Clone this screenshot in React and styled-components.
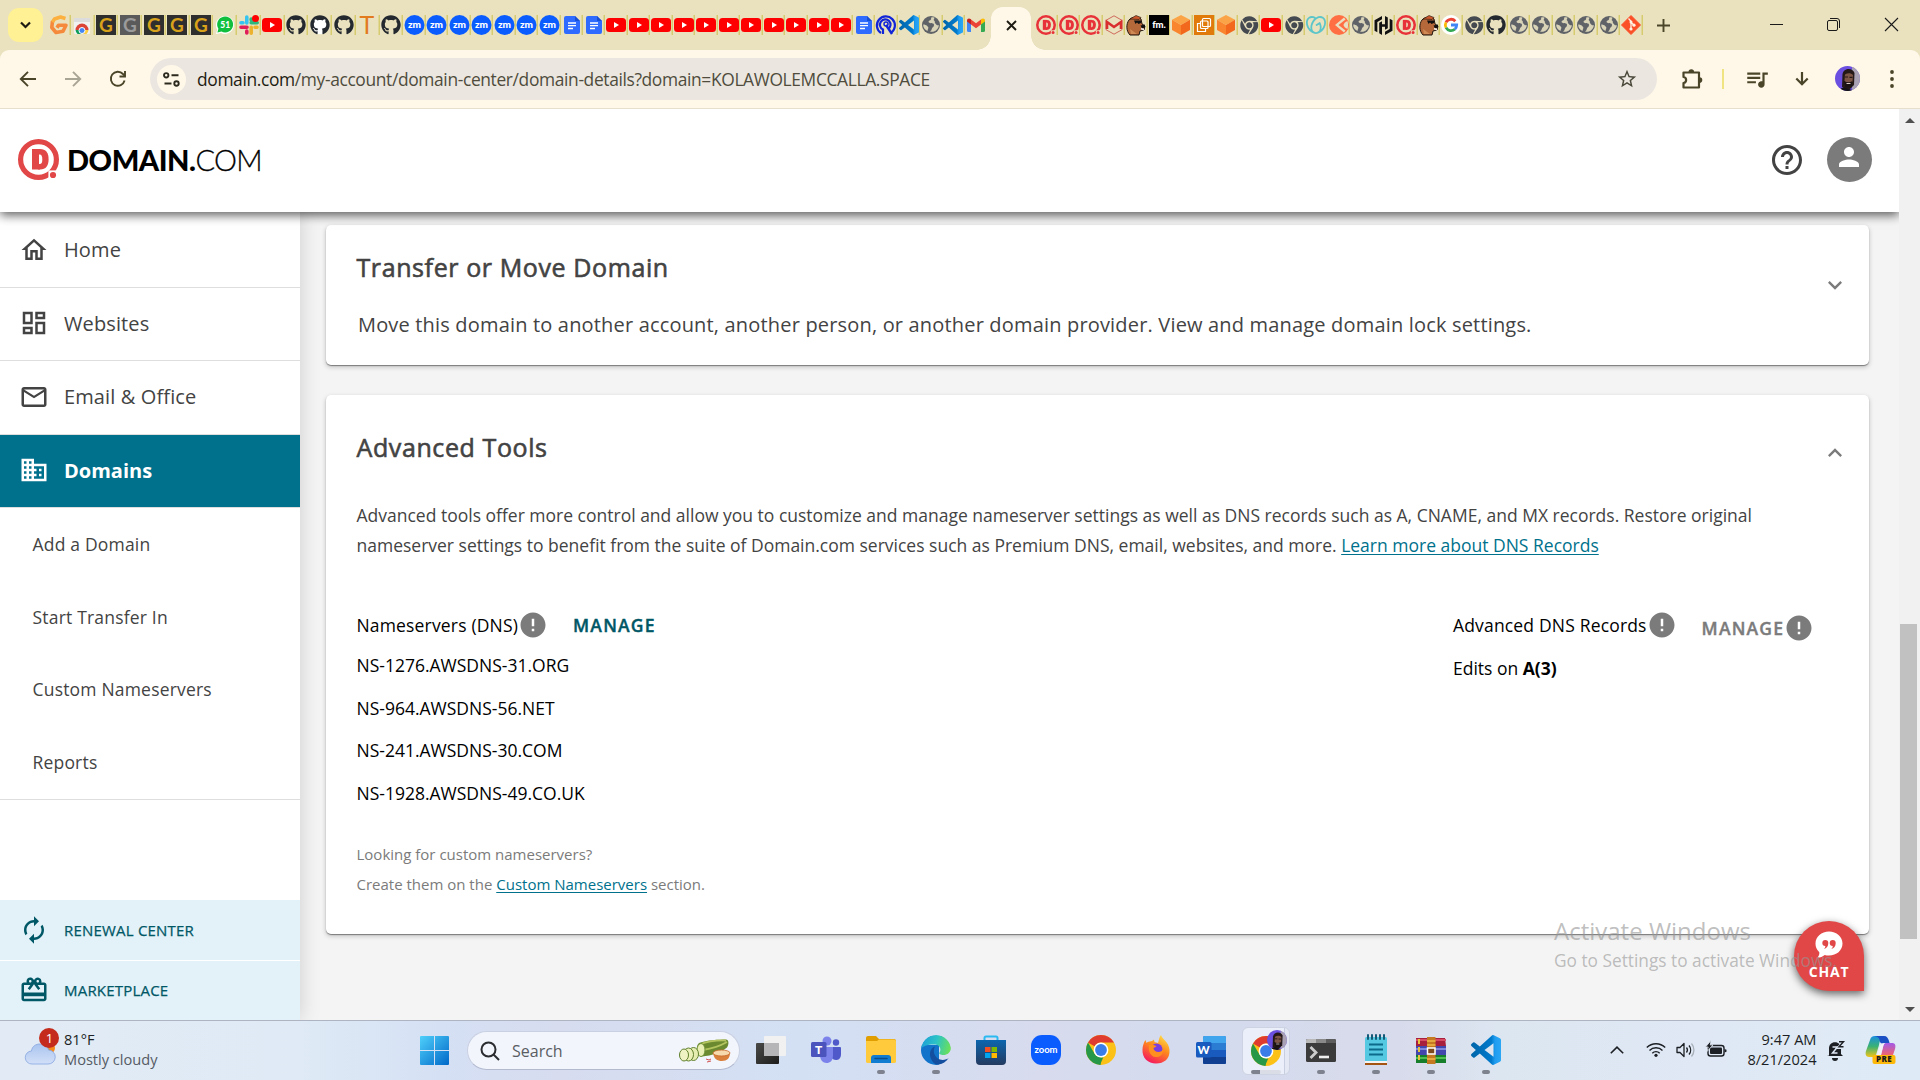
import React from 'react';
import styled, { createGlobalStyle } from 'styled-components';
import {
  MdOutlineHome, MdOutlineDashboard, MdOutlineEmail, MdDomain, MdAutorenew, MdRedeem,
  MdHelpOutline, MdPerson, MdExpandMore, MdExpandLess, MdQueueMusic, MdError, MdStarBorder,
} from 'react-icons/md';
import { FaGithub, FaChrome } from 'react-icons/fa';
import { SiGodaddy, SiHashicorp } from 'react-icons/si';

const Global = createGlobalStyle`
  * { box-sizing: border-box; }
  html, body { margin: 0; padding: 0; overflow: hidden; }
  body { font-family: "Open Sans", "Noto Sans", sans-serif; }
  svg { display: block; flex: none; overflow: visible; }
`;

const Screen = styled.div`
  width: 1920px;
  height: 1080px;
  display: flex;
  flex-direction: column;
  overflow: hidden;
  background: #eae2be;
`;

/* ---------- tab strip ---------- */
const TabStrip = styled.div`
  height: 50px;
  flex: none;
  display: flex;
  align-items: center;
`;
const TabSearch = styled.div`
  width: 35px;
  height: 34px;
  margin: 0 4px 0 8px;
  border-radius: 11px;
  background: #fff194;
  display: flex;
  align-items: center;
  justify-content: center;
`;
const Tab = styled.div`
  width: ${(p) => p.$w}px;
  height: 20px;
  flex: none;
  display: flex;
  align-items: center;
  justify-content: center;
  box-shadow: ${(p) => (p.$last ? 'none' : 'inset -1.5px 0 0 #d6cb6e')};
  padding-right: 0.5px;
`;
const ActiveTab = styled.div`
  width: 40px;
  height: 43px;
  margin: 7px 4px 0 4px;
  flex: none;
  border-radius: 12px 12px 0 0;
  background: #fff8e9;
  display: flex;
  align-items: center;
  justify-content: center;
  padding-bottom: 7px;
  position: relative;
  &::before, &::after {
    content: '';
    position: absolute;
    bottom: 0;
    width: 14px;
    height: 14px;
  }
  &::before { left: -14px; background: radial-gradient(circle at 0 0, transparent 13.5px, #fff8e9 14px); }
  &::after { right: -14px; background: radial-gradient(circle at 100% 0, transparent 13.5px, #fff8e9 14px); }
`;
const NewTab = styled.div`
  width: 41px;
  display: flex;
  justify-content: center;
`;
const WindowButtons = styled.div`
  margin-left: auto;
  display: flex;
  align-items: center;
  gap: 44.5px;
  padding: 0 22.5px 2px 0;
`;

/* ---------- toolbar ---------- */
const Toolbar = styled.div`
  height: 59px;
  flex: none;
  display: flex;
  align-items: center;
  background: #fff8e9;
  border-bottom: 1px solid #e6dfcb;
  border-radius: 9px 9px 0 0;
  padding: 0 20px 0 19px;
`;
const NavButtons = styled.div`
  display: flex;
  gap: 27px;
  width: 131px;
  padding-bottom: 1px;
`;
const Omnibox = styled.div`
  width: 1507px;
  height: 42px;
  flex: none;
  border-radius: 21px;
  background: #ebe7e0;
  display: flex;
  align-items: center;
  padding: 0 19px 0 7px;
`;
const SiteChip = styled.div`
  width: 29px;
  height: 29px;
  border-radius: 50%;
  background: #fff8e9;
  display: flex;
  align-items: center;
  justify-content: center;
  margin-right: 11px;
`;
const Url = styled.div`
  flex: 1;
  font-size: 17.4px;
  letter-spacing: -0.36px;
  color: #4f4c3d;
  white-space: nowrap;
  b { font-weight: 400; color: #1e1c12; }
`;
const ToolbarActions = styled.div`
  flex: 1;
  display: flex;
  align-items: center;
  padding-bottom: 1px;
`;
const Action = styled.div`
  margin-left: ${(p) => p.$gap}px;
`;
const ToolbarDivider = styled.div`
  width: 2px;
  height: 20px;
  background: #efe382;
`;

/* ---------- page ---------- */
const Viewport = styled.div`
  height: 911px;
  flex: none;
  display: flex;
  position: relative;
  background: #f4f4f4;
`;
const Page = styled.div`
  width: 1899px;
  display: flex;
  flex-direction: column;
  overflow: hidden;
`;
const Header = styled.header`
  height: 103px;
  flex: none;
  display: flex;
  align-items: center;
  background: #fff;
  padding: 0 27px 2px 18px;
  box-shadow: 0 3px 10px rgba(0, 0, 0, 0.65);
  position: relative;
  z-index: 2;
`;
const Brand = styled.div`
  display: flex;
  align-items: center;
  gap: 8px;
  flex: 1;
`;
const Wordmark = styled.div`
  font-family: Lato, sans-serif;
  font-size: 29px;
  line-height: 36px;
  letter-spacing: -0.7px;
  font-weight: 300;
  color: #000;
  -webkit-text-stroke: 0.3px #000;
  strong { font-weight: 900; letter-spacing: -0.45px; -webkit-text-stroke: 0; }
`;
const Avatar = styled.div`
  width: 45px;
  height: 45px;
  border-radius: 50%;
  background: #7b7b7b;
  color: #fff;
  display: flex;
  align-items: center;
  justify-content: center;
  padding: 0 1px 5px 0;
  margin-left: 22px;
`;
const Body = styled.div`
  flex: 1;
  display: flex;
  min-height: 0;
`;
const Sidebar = styled.nav`
  width: 300px;
  flex: none;
  display: flex;
  flex-direction: column;
  background: #fff;
  box-shadow: 0 0 20px rgba(0, 0, 0, 0.16);
`;
const NavItem = styled.div`
  height: ${(p) => p.$h}px;
  flex: none;
  display: flex;
  align-items: center;
  gap: 15px;
  padding: 0 0 ${(p) => (p.$first ? 0 : 2)}px 19px;
  border-bottom: 1px solid #dedede;
  font-size: 20px;
  letter-spacing: ${(p) => (p.$active ? 0 : 0.12)}px;
  font-weight: ${(p) => (p.$active ? 700 : 400)};
  color: ${(p) => (p.$active ? '#fff' : '#434343')};
  background: ${(p) => (p.$active ? '#00718c' : '#fff')};
`;
const SubNav = styled.div`
  border-bottom: 1px solid #dedede;
`;
const SubItem = styled.div`
  height: 72.7px;
  display: flex;
  align-items: center;
  padding: 0 0 1px 32.5px;
  font-size: 17.5px;
  letter-spacing: 0.19px;
  color: #434343;
`;
const Promo = styled.div`
  margin-top: auto;
  display: flex;
  flex-direction: column;
  gap: 1px;
`;
const PromoItem = styled.div`
  height: ${(p) => p.$h}px;
  display: flex;
  align-items: center;
  gap: 15px;
  padding: 0 0 1px 19px;
  background: #e3f2f8;
  color: #005766;
  font-size: 15px;
  font-weight: 500;
  letter-spacing: 0.2px;
  -webkit-text-stroke: 0.25px #005766;
  svg { -webkit-text-stroke: 0; }
`;
const Main = styled.main`
  flex: 1;
  display: flex;
  flex-direction: column;
  gap: 30px;
  padding: 13px 30px 0 26px;
`;
const Card = styled.section`
  height: ${(p) => p.$h}px;
  flex: none;
  display: flex;
  justify-content: space-between;
  background: #fff;
  border-radius: 5px;
  padding: ${(p) => p.$pt}px 20px 0 30.5px;
  box-shadow: 0 1px 1px rgba(0, 0, 0, 0.4), 0 2px 5px rgba(0, 0, 0, 0.22);
  color: #434343;
`;
const CardBody = styled.div`
  width: 1440px;
  display: flex;
  flex-direction: column;
`;
const CardTitle = styled.h2`
  margin: 0;
  font-size: 25px;
  line-height: 40px;
  font-weight: 400;
  letter-spacing: 0.6px;
  -webkit-text-stroke: 0.6px #434343;
`;
const CardLead = styled.p`
  margin: 23px 0 0 1.5px;
  font-size: 20px;
  line-height: 30px;
  letter-spacing: 0.175px;
  white-space: nowrap;
`;
const CardText = styled.p`
  margin: 33px 0 0;
  font-size: 17.5px;
  line-height: 30px;
  white-space: nowrap;
`;
const Link = styled.a`
  color: #00718c;
  text-decoration: underline;
  text-underline-offset: 2px;
`;
const Chevron = styled.div`
  color: #7b7b7b;
  padding-top: ${(p) => p.$top}px;
  height: 0;
`;
const DnsColumns = styled.div`
  display: flex;
  justify-content: space-between;
  margin-top: 50px;
  color: #000;
`;
const DnsColumn = styled.div`
  width: ${(p) => p.$w}px;
  flex: none;
  font-size: 17.5px;
`;
const DnsHead = styled.div`
  display: flex;
  align-items: center;
  height: 30px;
  letter-spacing: 0.17px;
  white-space: nowrap;
  svg { color: #7b7b7b; }
`;
const Manage = styled.span`
  display: flex;
  align-items: center;
  margin-left: 25px;
  font-weight: 600;
  letter-spacing: 1.2px;
  color: ${(p) => (p.$muted ? '#7b7b7b' : '#005766')};
  -webkit-text-stroke: 0.4px ${(p) => (p.$muted ? '#7b7b7b' : '#005766')};
  padding-top: ${(p) => (p.$muted ? 5 : 0)}px;
  svg { stroke-width: 0; }
`;
const ServerList = styled.div`
  margin-top: 4px;
  line-height: 42.7px;
`;
const Edits = styled.div`
  margin-top: 13px;
  line-height: 30px;
`;
const Hint = styled.div`
  margin-top: 24.5px;
  font-size: 15px;
  line-height: 30px;
  color: #7b7b7b;
`;

const Scrollbar = styled.div`
  width: 21px;
  display: flex;
  flex-direction: column;
  align-items: center;
  background: #f1f1f1;
  padding: 9px 0 8px;
`;
const Thumb = styled.div`
  width: 17px;
  height: 315px;
  margin: 501px 2px auto 0;
  background: #c1c1c1;
`;
const Arrow = styled.div`
  border: 5px solid transparent;
  border-${(p) => (p.$up ? 'bottom' : 'top')}-color: #505050;
  border-${(p) => (p.$up ? 'top' : 'bottom')}-width: 0;
`;

const ChatButton = styled.div`
  position: absolute;
  right: 56px;
  bottom: 29px;
  width: 70px;
  height: 70px;
  border-radius: 35px 35px 0 35px;
  background: #e14747;
  box-shadow: 0 3px 9px rgba(0, 0, 0, 0.6);
  display: flex;
  flex-direction: column;
  align-items: center;
  padding-top: 10px;
  gap: 4px;
  color: #fff;
  font-size: 14px;
  line-height: 19px;
  font-weight: 700;
  letter-spacing: 0.8px;
`;
const Watermark = styled.div`
  position: absolute;
  left: 1554px;
  top: 805px;
  color: rgba(150, 150, 150, 0.62);
  white-space: nowrap;
  font-size: 17.3px;
  line-height: 26px;
  div { font-size: 24px; line-height: 34px; }
`;

/* ---------- taskbar ---------- */
const Taskbar = styled.div`
  height: 60px;
  flex: none;
  display: flex;
  align-items: center;
  border-top: 1px solid #aeb4c2;
  background: linear-gradient(90deg, #e2ebf5 0, #dfeaf6 300px, #d5e0f4 440px, #d7dcef 560px, #d3e0f4 800px, #d8dbee 1040px, #d4dbee 1200px, #d8dbeb 1400px, #dce6f1 1500px, #dfe8f4 1700px, #deebf6 1920px);
  color: #1c1f24;
`;
const Weather = styled.div`
  display: flex;
  gap: 7px;
  align-items: center;
  width: 420px;
  padding: 0 0 4px 25px;
  svg { margin-bottom: 3px; }
`;
const TwoLines = styled.div`
  font-size: 14.6px;
  line-height: 20px;
  white-space: nowrap;
  text-align: ${(p) => (p.$end ? 'right' : 'left')};
  span { color: ${(p) => (p.$end ? '#1c1f24' : '#555b64')}; }
`;
const SearchBox = styled.div`
  width: 273px;
  height: 39px;
  margin: 0 3px 0 18px;
  border-radius: 20px;
  border: 1px solid #c9d0e2;
  border-bottom-color: #b3bad0;
  background: #f2f5fc;
  display: flex;
  align-items: center;
  padding: 0 8px 0 12px;
  font-size: 16px;
  color: #5a5d63;
  svg:last-child { margin-left: auto; }
  svg:first-child { margin-right: 12px; }
`;
const TaskApp = styled.div`
  width: 55px;
  height: 59px;
  flex: none;
  display: flex;
  flex-direction: column;
  align-items: center;
  justify-content: center;
  padding-bottom: 1px;
  position: relative;
  &::after {
    content: '';
    display: ${(p) => (p.$running ? 'block' : 'none')};
    position: absolute;
    bottom: 6px;
    left: 24px;
    width: 8px;
    height: 4px;
    border-radius: 2px;
    background: #7d828e;
  }
`;
const ActiveApp = styled.div`
  width: 48px;
  height: 48px;
  margin: 0 3px 0 4px;
  flex: none;
  border-radius: 6px;
  border: 1px solid #cdd3e3;
  background: linear-gradient(90deg, #ebeff9 0 41px, #c8cfe0 41px 42px, #e3e8f4 42px);
  display: flex;
  align-items: center;
  justify-content: center;
  position: relative;
  &::after {
    content: '';
    position: absolute;
    bottom: 0;
    left: 8px;
    width: 30px;
    height: 4px;
    border-radius: 2px;
    background: linear-gradient(90deg, #7d828e 0 9px, #dadde5 9px);
  }
`;
const FaceBadge = styled.div`
  position: absolute;
  right: 2px;
  top: 2px;
`;
const Tray = styled.div`
  margin-left: auto;
  display: flex;
  align-items: center;
  padding-right: 13.5px;
`;
const TrayIcon = styled.div`
  width: ${(p) => p.$w}px;
  display: flex;
  justify-content: center;
  padding-bottom: ${(p) => (p.$up ? 2 : 1)}px;
`;
const ClockBox = styled.div`
  width: 80px;
  display: flex;
  justify-content: flex-end;
  padding-bottom: 4px;
`;

/* ---------- favicons ---------- */
const VS_PATH = 'M23.15 2.587L18.21.21a1.494 1.494 0 0 0-1.705.29l-9.46 8.63-4.12-3.128a.999.999 0 0 0-1.276.057L.327 7.261A1 1 0 0 0 .326 8.74L3.899 12 .326 15.26a1 1 0 0 0 .001 1.479L1.65 17.94a.999.999 0 0 0 1.276.057l4.12-3.128 9.46 8.63a1.492 1.492 0 0 0 1.704.29l4.942-2.377A1.5 1.5 0 0 0 24 20.06V3.939a1.5 1.5 0 0 0-.85-1.352zm-5.146 14.861L10.826 12l7.178-5.448v10.896z';

function VsCode({ size = 20 }) {
  return (
    <svg width={size} height={size} viewBox="0 0 24 24">
      <defs>
        <linearGradient id="vs" x1="0" x2="1"><stop offset="0" stopColor="#0065a9" /><stop offset=".68" stopColor="#007acc" /><stop offset=".8" stopColor="#1f9cf0" /><stop offset="1" stopColor="#2ba7f5" /></linearGradient>
      </defs>
      <path d={VS_PATH} fill="url(#vs)" />
    </svg>
  );
}
function DomainMark({ size = 20, color = '#e8323a', gap = '#eae2be' }) {
  return (
    <svg width={size} height={size} viewBox="0 0 41 41">
      <circle cx="20.5" cy="20.5" r="17.9" fill="none" stroke={color} strokeWidth="5.2" />
      <rect x="30.4" y="31.4" width="10.6" height="9.6" fill={gap} />
      <rect x="14" y="10" width="8" height="20.500" fill={color} />
      <path d="M20 10h2c6 0 8.600 4 8.600 10.200s-2.600 10.300-8.600 10.300h-2z" fill={color} />
      <path d="M21 15.400h.6c2 0 2.700 1.500 2.700 4.800s-.7 4.800-2.700 4.800h-.6z" fill={gap} />
      <circle cx="35" cy="36" r="3.100" fill={color} />
    </svg>
  );
}
function Letter({ bg, fg, t, fs = 17, w = 700, y }) {
  return (
    <svg width="20" height="20" viewBox="0 0 20 20">
      {bg && <rect width="20" height="20" fill={bg} />}
      <text x="10" y={y ?? 10 + fs * 0.355} textAnchor="middle" fontFamily="Lato, sans-serif" fontWeight={w} fontSize={fs} fill={fg}>{t}</text>
    </svg>
  );
}
const Youtube = () => (
  <svg width="20" height="20" viewBox="0 0 20 20"><rect y="3" width="20" height="14" rx="3.500" fill="#f00" /><path d="M8 7v6l5-3z" fill="#fff" /></svg>
);
const Doc = () => (
  <svg width="20" height="20" viewBox="0 0 20 20"><path d="M4 1h9l5 5v11a2 2 0 0 1-2 2H4a2 2 0 0 1-2-2V3a2 2 0 0 1 2-2z" fill="#2f6bff" /><path d="M13 1l5 5h-5z" fill="#1a4fd0" /><path d="M6 8h8M6 10.700h8M6 13.500h5" stroke="#fff" strokeWidth="1.300" /></svg>
);
const Zm = () => (
  <svg width="21" height="20" viewBox="0 0 21 20"><circle cx="10.500" cy="10" r="10" fill="#0b5cff" /><path d="M2 14a10 10 0 0 0 17 0 10 10 0 0 1-17 0z" fill="#0a3fc0" /><text x="10.500" y="13.200" fontFamily="Lato, sans-serif" fontWeight="900" fontSize="10" textAnchor="middle" fill="#fff">zm</text></svg>
);
const OrangeG = () => (
  <svg width="20" height="20" viewBox="0 0 20 20"><path d="M3.500 6L2.800 12.500l4.200 5 7-1.200 3-6H9.500l-1.500 2.500" fill="none" stroke="#f58a3c" strokeWidth="3.600" strokeLinejoin="round" /><path d="M16.500 3.500L11.500 2 5.500 4 3.500 7" fill="none" stroke="#fbb040" strokeWidth="3.600" strokeLinejoin="round" /></svg>
);
const WebStore = () => (
  <svg width="20" height="20" viewBox="0 0 20 20"><rect x="2" y="3" width="16" height="16" rx="1" fill="#f1f1f1" /><rect x="2" y="3" width="16" height="4" fill="#dcdcdc" /><path d="M3.500 15a6.500 6.500 0 0 1 13 0h-6.500z" fill="#db4437" /><path d="M3.500 15a6.500 6.500 0 0 0 2 4h4.500v-4z" fill="#0f9d58" /><path d="M16.500 15a6.500 6.500 0 0 1-2 4H10v-4z" fill="#ffcd40" /><circle cx="10" cy="15.500" r="3" fill="#4285f4" stroke="#fff" /></svg>
);
const WhatsApp = () => (
  <svg width="20" height="20" viewBox="0 0 20 20"><path d="M1 19l1.200-4.500A9 9 0 1 1 6 18z" fill="#fff" /><path d="M2.400 17.600l1-3.800A8 8 0 1 1 6.500 16.600z" fill="#11bf3e" /><text x="10.200" y="13" fontSize="8.500" fontWeight="900" fontFamily="Lato, sans-serif" textAnchor="middle" fill="#fff">51</text></svg>
);
const Slack = () => (
  <svg width="20" height="20" viewBox="0 0 20 20" strokeWidth="3.600" strokeLinecap="round"><path d="M7.800 2v6M2 7.800h2" stroke="#36c5f0" /><path d="M12.200 7.800h6M12.200 4v1" stroke="#2eb67d" /><path d="M12.200 12.200v6M16 12.200h2" stroke="#ecb22e" /><path d="M2 12.200h6M7.800 16v2" stroke="#e01e5a" /><circle cx="16.500" cy="3.500" r="3.500" fill="#f00" /></svg>
);
const QIcon = () => (
  <svg width="20" height="20" viewBox="0 0 20 20" fill="none" stroke="#1226d8"><path d="M5 18A9 9 0 1 1 15.500 17.500" strokeWidth="2.200" /><path d="M7 19v-4.500a5.300 5.300 0 1 1 5-.3" strokeWidth="2.200" /><path d="M10 10l6 9" strokeWidth="2.400" /><circle cx="10" cy="9" r="2" strokeWidth="1.500" /></svg>
);
const Gmail = () => (
  <svg width="18" height="20" viewBox="0 0 18 20"><path d="M0 5.500v10A1.500 1.500 0 0 0 1.500 17H4V8z" fill="#4285f4" /><path d="M18 5.500v10a1.500 1.500 0 0 1-1.500 1.500H14V8z" fill="#34a853" /><path d="M4 4.500L9 8.300l5-3.800v5L9 13.300 4 9.500z" fill="#ea4335" /><path d="M0 5.500C0 3.300 2.300 2.900 4 4.300v5.200L0 6.500z" fill="#c5221f" /><path d="M18 5.500c0-2.200-2.300-2.600-4-1.200v5.200l4-3z" fill="#fbbc04" /></svg>
);
const HexM = () => (
  <svg width="20" height="20" viewBox="0 0 20 20" fill="none"><path d="M10 .8l8 4.500v9.400l-8 4.500-8-4.500V5.300z" stroke="#cf6a5c" /><path d="M3 14V7l7 5 7-5v7" stroke="#d92f2f" strokeWidth="2.600" /></svg>
);
const Beaver = () => (
  <svg width="20" height="20" viewBox="0 0 20 20"><path d="M3 5c2-3 9-4 12-1l1 5 3 2-1 4-4 1-1 4H4C0 16 0 9 3 5z" fill="#b5693a" stroke="#20140d" /><path d="M4 4l6-3.500 5 2-2 2z" fill="#c9572b" stroke="#20140d" strokeWidth=".6" /><path d="M8 5.500h7v2.500l-2.500 1-1.500-1.500L9.500 9z" fill="#111" /><path d="M14.500 10.500l4.500-1v3l-3 1z" fill="#111" /><path d="M15 13l3 .5v2l-3-1z" fill="#eee" /><path d="M4 14l7 5H5z" fill="#d08a55" /></svg>
);
const Cube = () => (
  <svg width="20" height="20" viewBox="0 0 20 20"><path d="M10 0l9 4.800L10 10 1 4.800z" fill="#fba447" /><path d="M1 4.800L10 10v10l-9-5z" fill="#f9862f" /><path d="M19 4.800L10 10v10l9-5z" fill="#f2681c" /></svg>
);
const Stacks = () => (
  <svg width="20" height="20" viewBox="0 0 20 20"><rect width="20" height="20" fill="#e07b0b" /><g fill="none" stroke="#fff" strokeWidth="1.200"><rect x="8.500" y="3.500" width="8" height="8" rx="1" /><rect x="6.500" y="6" width="7.500" height="7.500" rx="1" /><path d="M6.500 8.500H3.500v8h8v-3" /></g></svg>
);
const OrangeDisc = () => (
  <svg width="20" height="20" viewBox="0 0 20 20"><circle cx="10" cy="10" r="10" fill="#ff6f43" /><path d="M15 2.500l1.500 2L9.500 10l7 5.500-1.500 2L6 10z" fill="#eadfc0" /><path d="M18.500 6c-2 1-4 2.500-4 4s2 3 4 4c.8-2.500.8-5.500 0-8z" fill="#eadfc0" /></svg>
);
const GoogleG = () => (
  <svg width="20" height="20" viewBox="0 0 20 20"><circle cx="10" cy="10" r="10" fill="#fff" /><g fill="none" strokeWidth="2.800"><path d="M14.300 6.200A5.700 5.700 0 0 0 5 7.300" stroke="#ea4335" /><path d="M5 7.300a5.700 5.700 0 0 0 0 5.400" stroke="#fbbc05" /><path d="M5 12.700a5.700 5.700 0 0 0 8.800 1.500" stroke="#34a853" /><path d="M13.800 14.200A5.700 5.700 0 0 0 15.700 10H10" stroke="#4285f4" /></g></svg>
);
const Git = () => (
  <svg width="20" height="20" viewBox="0 0 20 20"><path d="M10 .5l9.500 9.500-9.500 9.500L.5 10z" fill="#fb4f28" stroke="#fb4f28" strokeLinejoin="round" /><path d="M7.500 3.500l2.500 2.700v8.300M10 7.200l3 3" stroke="#fff3e4" strokeWidth="1.300" fill="none" /><circle cx="10" cy="14" r="1.600" fill="#fff3e4" /><circle cx="13" cy="10.200" r="1.600" fill="#fff3e4" /><circle cx="10" cy="7" r="1.500" fill="#fff3e4" /></svg>
);
const DarkG = () => <Letter bg="#2e2e2e" fg="#d9a21b" t="G" fs={19} />;
const GreyG = () => <Letter bg="#5a5a5a" fg="#9b9b9b" t="G" fs={19} />;
const Octo = () => <FaGithub size={20} color="#24292f" />;
const OctoWhite = () => (
  <svg width="20" height="20" viewBox="0 0 20 20"><circle cx="10" cy="10" r="9.300" fill="#fff" /><FaGithub size={20} color="#24292f" /></svg>
);
const TIcon = () => <Letter fg="#e27a1e" t="T" fs={25} w={400} />;
const Globe = () => (
  <svg width="20" height="20" viewBox="0 0 20 20"><circle cx="10" cy="10" r="9" fill="#5f6368" /><path d="M10.500 2.200c-1 1.500.5 2-1.500 3S7 7.500 9 8s4 0 4 2-1.500 2-2 3.500-1 2.500-2 3c4 1.500 8.800-2 8.800-6.500-1.500 1-2.500-.5-3.500-1.500s0-2-1-2.700-.5-2.500.5-3.100c-1-.4-2.300-.5-3.300-.5zM2.200 9.500c1.500 0 3 .5 4 1.500s1.500 1.500 1 2.500-.5 2-.7 2.500C3.500 14.800 2 12 2.200 9.500z" fill="#d9d3b8" /></svg>
);
const GreyChrome = () => <FaChrome size={18.5} color="#454a50" />;
const Fm = () => <Letter bg="#000" fg="#fff" t="fm." fs={9.5} w={900} y={13} />;
const Teal = () => <SiGodaddy size={20} color="#5cc5c9" />;
const Hashi = () => <SiHashicorp size={19} color="#111" />;
const D = () => <DomainMark />;

const rep = (C, n) => Array(n).fill(C);
const WIDE_TABS = [OrangeG, WebStore, DarkG, GreyG, DarkG, DarkG, DarkG, WhatsApp, Slack, Youtube, Octo, OctoWhite, Octo, TIcon, Octo];
const LEFT_TABS = [...rep(Zm, 7), Doc, Doc, ...rep(Youtube, 11), Doc, QIcon, VsCode, Globe, VsCode, Gmail];
const RIGHT_TABS = [D, D, D, HexM, Beaver, Fm, Cube, Stacks, Cube, GreyChrome, Youtube, GreyChrome, Teal, OrangeDisc, Globe, Hashi, D, Beaver, GoogleG, GreyChrome, Octo, ...rep(Globe, 5), Git];

function Tabs({ items, width, openEnd }) {
  return items.map((Icon, i) => (
    <Tab key={i} $w={width} $last={openEnd && i === items.length - 1}><Icon /></Tab>
  ));
}

function Face({ size }) {
  return (
    <svg width={size} height={size} viewBox="0 0 25 25">
      <defs><clipPath id="face"><circle cx="12.500" cy="12.500" r="12.500" /></clipPath></defs>
      <g clipPath="url(#face)">
        <rect width="25" height="25" fill="#6a4fe0" />
        <rect x="17" width="8" height="25" fill="#a9a1b4" />
        <path d="M7.500 8c1-6 10-7 12-1l-.5 12-6 6-6-4z" fill="#241918" />
        <path d="M10 8.500c3-2 6-1.500 8 .5l-.5 7-4 3-4-4z" fill="#7d5546" />
        <path d="M10 11h3M14.500 11.300h3" stroke="#241918" strokeWidth="1.200" />
        <path d="M9 15c3 2 6 1.500 8.500 0l-1 6.500h-6z" fill="#1a1213" />
        <path d="M11.500 17.500h4" stroke="#d8c9c4" />
        <path d="M4 25c1-3 4-4 7-3l9 3z" fill="#141217" />
      </g>
    </svg>
  );
}

/* ---------- taskbar icons ---------- */
const WinLogo = () => (
  <svg width="29" height="29" viewBox="0 0 29 29"><defs><linearGradient id="win" x1="0" y1="0" x2="1" y2="1"><stop offset="0" stopColor="#4fd0fb" /><stop offset="1" stopColor="#0068c8" /></linearGradient></defs><path d="M1 0h13v14H0V1a1 1 0 0 1 1-1zM15 0h13a1 1 0 0 1 1 1v13H15zM0 15h14v14H1a1 1 0 0 1-1-1zM15 15h14v13a1 1 0 0 1-1 1H15z" fill="url(#win)" /></svg>
);
const Squash = () => (
  <svg width="52" height="24" viewBox="0 0 52 24"><path d="M20 4c8-3 20-3.500 27-3.500 3 0 3 5 1 8-6 5-15 8-25 9-5 0-7-10.500-3-13.500z" fill="#6b8a30" /><path d="M21 5.500c8-3.500 18-4.200 26-4M23 11c9-1 18-4 25-8" stroke="#b3c45e" fill="none" strokeWidth="1.800" /><ellipse cx="22" cy="11" rx="4" ry="6.500" fill="#e9efb5" stroke="#6f8f35" /><ellipse cx="14.500" cy="15" rx="5" ry="6.500" fill="#e6edb0" stroke="#5f7f2c" /><ellipse cx="9.500" cy="15.500" rx="5" ry="6.500" fill="#eaf0b8" stroke="#5f7f2c" /><ellipse cx="5" cy="16" rx="4.500" ry="6" fill="#eff3c4" stroke="#5f7f2c" /><path d="M34 14h17c0 5-3 8-8 8s-8-2-9-8z" fill="#d9803c" /><ellipse cx="42.500" cy="14" rx="8.500" ry="3" fill="#f6d9ac" stroke="#c96b2c" strokeWidth=".8" /><path d="M27 20l3 1 2-1M28 23l4-1" stroke="#d05252" fill="none" /></svg>
);
const TaskView = () => (
  <svg width="30" height="28" viewBox="0 0 30 28"><defs><linearGradient id="tv" x1="0" y1="0" x2="1" y2="1"><stop offset="0" stopColor="#4a4a48" /><stop offset="1" stopColor="#1d1d1b" /></linearGradient></defs><rect y="7" width="23" height="21" rx="1" fill="url(#tv)" /><rect x="8" width="22" height="20" rx="1" fill="#f1f1f2" /><rect x="8" y="7" width="15" height="13" fill="#b6b6b8" /></svg>
);
const Teams = () => (
  <svg width="30" height="28" viewBox="0 0 30 28"><circle cx="16" cy="5" r="4.500" fill="#7b83eb" /><circle cx="25" cy="6.500" r="3.200" fill="#5059c9" /><path d="M20 11h9a1 1 0 0 1 1 1v6c0 5-3 6-5 6s-4-1-5-3z" fill="#5059c9" /><path d="M9 11h13v8c0 6-3 8-6.500 8S9 24 9 19z" fill="#7b83eb" /><rect y="6" width="15.500" height="15" rx="1.500" fill="#4b53bc" /><text x="7.700" y="18" fontFamily="Lato, sans-serif" fontSize="12" fontWeight="900" textAnchor="middle" fill="#fff">T</text></svg>
);
const Explorer = () => (
  <svg width="30" height="28" viewBox="0 0 30 28"><path d="M0 2a2 2 0 0 1 2-2h8l3 3h15a2 2 0 0 1 2 2v6H0z" fill="#e09e00" /><path d="M0 5h11l2-1.500h15a2 2 0 0 1 2 1.500v21a2 2 0 0 1-2 1H2a2 2 0 0 1-2-1z" fill="#ffcb3d" /><path d="M5 27v-5a3 3 0 0 1 3-3h14a3 3 0 0 1 3 3v5z" fill="#0f7bd1" /><path d="M9 22.500h12" stroke="#0a4d8c" strokeWidth="1.500" strokeLinecap="round" /></svg>
);
const Edge = () => (
  <svg width="30" height="30" viewBox="0 0 30 30">
    <defs>
      <linearGradient id="eg" x1="0" y1=".3" x2="1" y2=".5"><stop offset="0" stopColor="#1c9fd8" /><stop offset=".5" stopColor="#2cc3c6" /><stop offset="1" stopColor="#6be05a" /></linearGradient>
      <clipPath id="ec"><circle cx="15" cy="15" r="15" /></clipPath>
    </defs>
    <g clipPath="url(#ec)">
      <path d="M0 10h18v20H0z" fill="#1173c9" />
      <path d="M0 14C1 5 7 0 15 0c9 0 15 6 15 12.500 0 5-4 7.500-7.500 7.500-3 0-5-1-4-2.500 2-2.500 1-7-4-8C8 9 1 11 0 14z" fill="url(#eg)" />
      <path d="M14 11.500C9.500 13 8 18 9.500 22.500 11 27 14 30 18 30c4-.5 8-3 10-7-2 1.500-6 2.500-9 1.500-5-1.500-8-8-5-13z" fill="#134f9e" />
    </g>
  </svg>
);
const Store = () => (
  <svg width="30" height="30" viewBox="0 0 30 30"><defs><linearGradient id="st" x1="0" y1="0" x2="0" y2="1"><stop offset="0" stopColor="#0c66ae" /><stop offset="1" stopColor="#243a60" /></linearGradient></defs><path d="M8.500 7V3a1.500 1.500 0 0 1 1.500-1.500h10A1.500 1.500 0 0 1 21.500 3v4" fill="none" stroke="#2bb9f2" strokeWidth="2" /><path d="M0 5h30v21a4 4 0 0 1-4 4H4a4 4 0 0 1-4-4z" fill="url(#st)" /><path d="M9 12h5.500v5H9z" fill="#f25022" /><path d="M15.500 12H21v5h-5.500z" fill="#7fba00" /><path d="M9 18h5.500v5H9z" fill="#00a4ef" /><path d="M15.500 18H21v5h-5.500z" fill="#ffb900" /></svg>
);
const ZoomApp = () => (
  <svg width="30" height="30" viewBox="0 0 30 30"><rect width="30" height="30" rx="11" fill="#0b5cff" /><text x="15" y="17.800" fontFamily="Lato, sans-serif" fontWeight="700" fontSize="9.500" textAnchor="middle" fill="#fff">zoom</text></svg>
);
const Chrome = () => (
  <svg width="30" height="30" viewBox="0 0 30 30"><circle cx="15" cy="15" r="15" fill="#fbc116" /><path d="M2 7.500A15 15 0 0 1 28 7.500H15A7.500 7.500 0 0 0 8.500 11.300z" fill="#df3b2f" /><path d="M2 7.500L8.600 18.800A7.500 7.500 0 0 0 15 22.500L14.500 30A15 15 0 0 1 2 7.500z" fill="#279847" /><path d="M8.600 18.800c2 3 5 4.200 8.700 3.400L14 30z" fill="#279847" /><circle cx="15" cy="15" r="7.400" fill="#fff" /><circle cx="15" cy="15" r="5.900" fill="#3a7de8" /></svg>
);
const Firefox = () => (
  <svg width="28" height="30" viewBox="0 0 28 30"><defs><linearGradient id="ff" x1=".8" y1="0" x2=".3" y2="1"><stop offset="0" stopColor="#ffe14a" /><stop offset=".45" stopColor="#ff8a1c" /><stop offset="1" stopColor="#f5155f" /></linearGradient></defs><path d="M19 0c1 4 8 7 8.500 15C28 24 22 28.500 14 28.500S0 23 .5 14.500C.5 11 2 7 3.500 5l1 3c1-1 2-1.500 3.500-1.500 1 0 3-1 4-2l.5 2.500L16 8c1-3 1-6 3-8z" fill="url(#ff)" /><circle cx="14.500" cy="14.500" r="6" fill="#7a3de0" /><path d="M7 10c3-1.500 6 0 7.500 1.500l-3 1.500c0 2 2 4 5 4 2 0 4-1 4.500-3 1 5-3 8.500-7.500 8C9 21.500 6 17 7 10z" fill="#ff8f1f" /></svg>
);
const Word = () => (
  <svg width="30" height="30" viewBox="0 0 30 30"><rect x="7" y="1" width="23" height="28" rx="1.500" fill="#185abd" /><path d="M7 2.500A1.500 1.500 0 0 1 8.500 1h20A1.500 1.500 0 0 1 30 2.500V8H7z" fill="#41a5ee" /><path d="M7 8h23v7H7z" fill="#2b7cd3" /><path d="M7 22h23v5.500a1.500 1.500 0 0 1-1.500 1.500h-20A1.500 1.500 0 0 1 7 27.500z" fill="#103f91" /><rect y="7" width="15.500" height="15.500" rx="1.500" fill="#185abd" /><text x="7.700" y="19" fontFamily="Lato, sans-serif" fontWeight="900" fontSize="11.500" textAnchor="middle" fill="#fff">W</text></svg>
);
const Terminal = () => (
  <svg width="30" height="23" viewBox="0 0 30 23"><rect width="30" height="23" rx="1.500" fill="#3b3b3b" /><path d="M0 1.500A1.500 1.500 0 0 1 1.500 0H10v4H0z" fill="#b9b9b9" /><path d="M10 0h10v4H10z" fill="#8a8a8a" /><path d="M20 0h8.500A1.500 1.500 0 0 1 30 1.500V4H20z" fill="#5d5d5d" /><path d="M4.500 8l5.500 5.500-5.500 5.500" stroke="#ccc" strokeWidth="2.800" fill="none" /><path d="M13 18h10" stroke="#eee" strokeWidth="2.600" /></svg>
);
const Notepad = () => (
  <svg width="24" height="30" viewBox="0 0 24 30"><rect x="1" y="2" width="22" height="25" rx="1.500" fill="#55c8e2" /><path d="M1 26h22v2.500H1z" fill="#f3f3f3" /><path d="M1 28h22v2H1z" fill="#a35312" /><path d="M4 0v4M8 0v4M12 0v4M16 0v4M20 0v4" stroke="#135a78" strokeWidth="2" strokeLinecap="round" /><path d="M5 9.500h14M5 14.500h14M5 19.500h14" stroke="#0c6a8a" strokeWidth="1.800" /></svg>
);
const WinRar = () => (
  <svg width="30" height="27" viewBox="0 0 30 27"><path d="M0 1h29l1 8H0z" fill="#a81f3d" /><path d="M0 2h30v2H0z" fill="#d64a63" /><path d="M0 9h30v9H0z" fill="#4347ad" /><path d="M0 11h30v2H0z" fill="#8186dd" /><path d="M0 18h30v8H0z" fill="#177f2c" /><path d="M0 20h30v2H0z" fill="#4fbf52" /><path d="M3 2v22" stroke="#e8c43e" strokeWidth="2" strokeDasharray="5 3" /><rect x="11" width="8.500" height="27" fill="#c57a22" /><path d="M11 4h8.500M11 8h8.500M11 22h8.500" stroke="#f0b848" strokeWidth="1.500" /><rect x="11.500" y="11" width="7.500" height="6" fill="#7c4a1d" stroke="#fff" strokeWidth="1.500" /></svg>
);
const Copilot = () => (
  <svg width="30" height="28" viewBox="0 0 30 28"><defs><linearGradient id="cp" x1="0" y1="0" x2="0" y2="1"><stop offset="0" stopColor="#1a8fe0" /><stop offset=".5" stopColor="#3bb273" /><stop offset="1" stopColor="#f0c419" /></linearGradient><linearGradient id="cq" x1="0" y1="0" x2="0" y2="1"><stop offset="0" stopColor="#a25ae8" /><stop offset="1" stopColor="#f0656f" /></linearGradient></defs><path d="M9 0h9c-3 1-4 4-5 9l-3 10c-.5 1-1 2-3 2H3c-3 0-4-3-3-6L4 4c1-3 2-4 5-4z" fill="url(#cp)" /><path d="M12 0h6c3 0 4 2 5 5l.5 2H19c-3 0-4 1-5-1-.5-3-1-5-5-6z" fill="#1b4fc4" /><path d="M20 7h6c3 0 4 2 3 6l-2 6H15l2-8c.5-2 1-4 3-4z" fill="url(#cq)" /><path d="M16 8c-2 1-2.500 3-3 5l-2 6h4l2-8c.3-1.500.8-3 2-4z" fill="#f3f0f8" /><rect x="6.500" y="19" width="23" height="9" rx="2" fill="#fdb90a" /><text x="18" y="26.400" fontFamily="Open Sans, sans-serif" fontWeight="800" fontSize="8" letterSpacing=".4" textAnchor="middle" fill="#1a1a1a">PRE</text></svg>
);
const VsCodeApp = () => <VsCode size={30} />;
const APPS_BEFORE = [[TaskView], [Teams], [Explorer, 1], [Edge, 1], [Store], [ZoomApp], [Chrome], [Firefox], [Word]];
const APPS_AFTER = [[Terminal, 1], [Notepad, 1], [WinRar, 1], [VsCodeApp, 1]];

const NAV = [
  { label: 'Home', icon: MdOutlineHome, h: 76 },
  { label: 'Websites', icon: MdOutlineDashboard, h: 73 },
  { label: 'Email & Office', icon: MdOutlineEmail, h: 74 },
  { label: 'Domains', icon: MdDomain, h: 73, active: true },
];
const SUB = ['Add a Domain', 'Start Transfer In', 'Custom Nameservers', 'Reports'];
const SERVERS = ['NS-1276.AWSDNS-31.ORG', 'NS-964.AWSDNS-56.NET', 'NS-241.AWSDNS-30.COM', 'NS-1928.AWSDNS-49.CO.UK'];

function BrowserChrome() {
  return (
    <>
      <TabStrip>
        <TabSearch><svg width="11" height="8" viewBox="0 0 11 8"><path d="M1 1.500l4.500 4.500L10 1.500" stroke="#1e1c12" strokeWidth="2.200" fill="none" /></svg></TabSearch>
        <Tabs items={WIDE_TABS} width={23.75} />
        <Tabs items={LEFT_TABS} width={22.48} openEnd />
        <ActiveTab><svg width="11" height="11" viewBox="0 0 11 11"><path d="M1 1l9 9M10 1l-9 9" stroke="#1e1c12" strokeWidth="1.900" /></svg></ActiveTab>
        <Tabs items={RIGHT_TABS} width={22.5} />
        <NewTab><svg width="13" height="13" viewBox="0 0 13 13"><path d="M6.500 0v13M0 6.500h13" stroke="#4a4528" strokeWidth="1.900" /></svg></NewTab>
        <WindowButtons>
          <svg width="13" height="13" viewBox="0 0 13 13"><path d="M0 6.500h13" stroke="#1a1a1a" /></svg>
          <svg width="13" height="13" viewBox="0 0 13 13" fill="none" stroke="#1a1a1a"><rect x=".5" y="2.500" width="10" height="10" rx="1.500" /><path d="M3 .5h7a2.500 2.500 0 0 1 2.500 2.500v7" /></svg>
          <svg width="13" height="13" viewBox="0 0 13 13"><path d="M0 0l13 13M13 0L0 13" stroke="#1a1a1a" strokeWidth="1.100" /></svg>
        </WindowButtons>
      </TabStrip>
      <Toolbar>
        <NavButtons>
          <svg width="18" height="18" viewBox="0 0 18 18" fill="none" stroke="#4a4528" strokeWidth="1.900"><path d="M17 9H2.500M9 1.800L1.800 9 9 16.200" /></svg>
          <svg width="18" height="18" viewBox="0 0 18 18" fill="none" stroke="#a9a594" strokeWidth="1.900"><path d="M1 9h14.500M9 1.800L16.200 9 9 16.200" /></svg>
          <svg width="18" height="18" viewBox="0 0 18 18" fill="none" stroke="#4a4528" strokeWidth="1.900"><path d="M15.600 10.500A7 7 0 1 1 14 4l2 2" /><path d="M16 1v5.500h-5.500" /></svg>
        </NavButtons>
        <Omnibox>
          <SiteChip><svg width="17" height="15" viewBox="0 0 17 15" fill="none" stroke="#2c2a1e" strokeWidth="1.900"><circle cx="3.200" cy="3.300" r="2.200" /><path d="M8.500 3.300h7M1.500 11.500h7" /><circle cx="13.500" cy="11.500" r="2.200" /></svg></SiteChip>
          <Url><b>domain.com</b>/my-account/domain-center/domain-details?domain=KOLAWOLEMCCALLA.SPACE</Url>
          <MdStarBorder size={22} color="#4a483a" />
        </Omnibox>
        <ToolbarActions>
          <Action $gap={23.5}>
            <svg width="22" height="22" viewBox="0 0 22 22"><path d="M2.500 4.500h15.500v15H2.500v-4.500c3.500-.5 3.500-5.500 0-6z" fill="none" stroke="#4a4528" strokeWidth="2.200" strokeLinejoin="round" /><path d="M7.500 4a2.800 2.800 0 0 1 5.600 0zM18.500 9.300a2.800 2.800 0 0 1 0 5.600z" fill="#4a4528" /></svg>
          </Action>
          <Action $gap={19.5}><ToolbarDivider /></Action>
          <Action $gap={20}><MdQueueMusic size={26} color="#4a4528" /></Action>
          <Action $gap={25}><svg width="14" height="14" viewBox="0 0 14 14" fill="none" stroke="#4a4528" strokeWidth="2.200"><path d="M7 0v12M1.300 6.500L7 12.200l5.700-5.700" /></svg></Action>
          <Action $gap={25.5}><Face size={25} /></Action>
          <Action $gap={24.5}><svg width="16" height="18" viewBox="0 0 16 18" fill="#4a4528"><circle cx="8" cy="2" r="1.900" /><circle cx="8" cy="9" r="1.900" /><circle cx="8" cy="16" r="1.900" /></svg></Action>
        </ToolbarActions>
      </Toolbar>
    </>
  );
}

function DomainPage() {
  return (
    <Page>
      <Header>
        <Brand>
          <DomainMark size={41} color="#e14747" gap="#fff" />
          <Wordmark><strong>DOMAIN.</strong>COM</Wordmark>
        </Brand>
        <MdHelpOutline size={36} color="#434343" />
        <Avatar><MdPerson size={30} /></Avatar>
      </Header>
      <Body>
        <Sidebar>
          {NAV.map(({ label, icon: Icon, h, active }, i) => (
            <NavItem key={label} $h={h} $active={active} $first={i === 0}><Icon size={30} />{label}</NavItem>
          ))}
          <SubNav>{SUB.map((s) => <SubItem key={s}>{s}</SubItem>)}</SubNav>
          <Promo>
            <PromoItem $h={60}><MdAutorenew size={30} />RENEWAL CENTER</PromoItem>
            <PromoItem $h={59}><MdRedeem size={30} />MARKETPLACE</PromoItem>
          </Promo>
        </Sidebar>
        <Main>
          <Card $h={140} $pt={22}>
            <CardBody>
              <CardTitle>Transfer or Move Domain</CardTitle>
              <CardLead>Move this domain to another account, another person, or another domain provider. View and manage domain lock settings.</CardLead>
            </CardBody>
            <Chevron $top={24}><MdExpandMore size={28} /></Chevron>
          </Card>
          <Card $h={539} $pt={32}>
            <CardBody>
              <CardTitle>Advanced Tools</CardTitle>
              <CardText>
                Advanced tools offer more control and allow you to customize and manage nameserver settings as well as DNS records such as A, CNAME, and MX records. Restore original<br />
                nameserver settings to benefit from the suite of Domain.com services such as Premium DNS, email, websites, and more. <Link>Learn more about DNS Records</Link>
              </CardText>
              <DnsColumns>
                <DnsColumn $w={400}>
                  <DnsHead>Nameservers (DNS)<MdError size={30} /><Manage>MANAGE</Manage></DnsHead>
                  <ServerList>{SERVERS.map((s) => <div key={s}>{s}</div>)}</ServerList>
                  <Hint>Looking for custom nameservers?<br />Create them on the <Link>Custom Nameservers</Link> section.</Hint>
                </DnsColumn>
                <DnsColumn $w={343.5}>
                  <DnsHead>Advanced DNS Records<MdError size={30} /><Manage $muted>MANAGE<MdError size={30} /></Manage></DnsHead>
                  <Edits>Edits on <b>A(3)</b></Edits>
                </DnsColumn>
              </DnsColumns>
            </CardBody>
            <Chevron $top={12}><MdExpandLess size={28} /></Chevron>
          </Card>
        </Main>
      </Body>
    </Page>
  );
}

function WindowsTaskbar() {
  return (
    <Taskbar>
      <Weather>
        <svg width="32" height="46" viewBox="0 0 32 46">
          <defs><linearGradient id="cl" x1="0" y1="0" x2="0" y2="1"><stop offset="0" stopColor="#a9c4ef" /><stop offset="1" stopColor="#d3e0f8" /></linearGradient></defs>
          <circle cx="24" cy="24" r="6" fill="#f58a1f" />
          <path d="M7 40a6.500 6.500 0 0 1-.5-13C7 22 11 20 15 20c5 0 8 3 8.500 6A7 7 0 0 1 23 40z" fill="url(#cl)" stroke="#86a6df" strokeWidth=".8" />
          <circle cx="24" cy="14" r="10" fill="#c42b1c" />
          <text x="24.500" y="19" fontSize="13" fontFamily="Open Sans, sans-serif" textAnchor="middle" fill="#fff">1</text>
        </svg>
        <TwoLines>81°F<br /><span>Mostly cloudy</span></TwoLines>
      </Weather>
      <WinLogo />
      <SearchBox>
        <svg width="20" height="20" viewBox="0 0 20 20" fill="none" stroke="#2a2c30" strokeWidth="2"><circle cx="8.500" cy="8.500" r="7" /><path d="M13.500 13.500L19 19" /></svg>
        Search
        <Squash />
      </SearchBox>
      {APPS_BEFORE.map(([Icon, on], i) => <TaskApp key={i} $running={on}><Icon /></TaskApp>)}
      <ActiveApp><Chrome /><FaceBadge><Face size={20} /></FaceBadge></ActiveApp>
      {APPS_AFTER.map(([Icon, on], i) => <TaskApp key={i} $running={on}><Icon /></TaskApp>)}
      <Tray>
        <TrayIcon $w={40} $up><svg width="14" height="8" viewBox="0 0 14 8"><path d="M.8 7.300L7 1.200l6.200 6.100" stroke="#1c1f24" strokeWidth="1.600" fill="none" /></svg></TrayIcon>
        <TrayIcon $w={38} $up>
          <svg width="20" height="15" viewBox="0 0 20 15" fill="none" stroke="#1c1f24" strokeWidth="1.400"><path d="M.8 5.600a13 13 0 0 1 18.400 0M3.500 8.500a9.200 9.200 0 0 1 13 0M6.300 11.200a5.200 5.200 0 0 1 7.400 0" /><circle cx="10" cy="13.300" r="1.600" fill="#1c1f24" stroke="none" /></svg>
        </TrayIcon>
        <TrayIcon $w={22} $up>
          <svg width="20" height="16" viewBox="0 0 20 16" fill="none" stroke="#1c1f24" strokeWidth="1.300"><path d="M1 5.500h3l4-4v13l-4-4H1z" strokeLinejoin="round" /><path d="M10.500 5.500a4 4 0 0 1 0 5M13 3.500a7 7 0 0 1 0 9" /><path d="M15.500 1.500a10 10 0 0 1 0 13" stroke="#a9b0ba" /></svg>
        </TrayIcon>
        <TrayIcon $w={40} $up>
          <svg width="21" height="17" viewBox="0 0 21 17"><rect x="2" y="4.500" width="16" height="10.500" rx="2.500" fill="none" stroke="#1c1f24" strokeWidth="1.400" /><rect x="4" y="6.500" width="12" height="6.500" rx="1" fill="#1c1f24" /><path d="M18.500 8v3.500l2-.7V8.700z" fill="#1c1f24" /><path d="M5 -.5L-.5 6h2.700L1 10.500 7 4H4.300z" fill="#1c1f24" stroke="#dfe8f4" strokeWidth=".8" /></svg>
        </TrayIcon>
        <ClockBox><TwoLines $end>9:47 AM<br /><span>8/21/2024</span></TwoLines></ClockBox>
        <TrayIcon $w={38}>
          <svg width="18" height="19" viewBox="0 0 18 19"><path d="M2 14.500V7.500C2 3.500 4.500 1.200 8 1.200s6 2.300 6 6.300v5.500l2 2H0z" fill="#1c1f24" /><path d="M5 17h6a3 3 0 0 1-6 0z" fill="#1c1f24" /><path d="M5.500 6h5l-5 6h5" stroke="#dfe9f5" strokeWidth="1.500" fill="none" /><path d="M12 .8h5l-5 5.500h5" stroke="#dfe9f5" strokeWidth="3.400" fill="none" /><path d="M12 .8h4.500l-4.500 5h4.500" stroke="#1c1f24" strokeWidth="1.400" fill="none" /></svg>
        </TrayIcon>
        <TrayIcon $w={52}><Copilot /></TrayIcon>
      </Tray>
    </Taskbar>
  );
}

export default function App() {
  return (
    <Screen>
      <Global />
      <BrowserChrome />
      <Viewport>
        <DomainPage />
        <Scrollbar><Arrow $up /><Thumb /><Arrow /></Scrollbar>
        <ChatButton>
          <svg width="28" height="27" viewBox="0 0 28 27"><path d="M14 .5c7.500 0 13.500 5 13.500 12S21.500 24.500 14 24.500c-1.500 0-3-.2-4.300-.6C8 25.500 5 26.500 2.500 26.500c1.500-1.500 2-3.500 1.800-5.300A11.500 11.500 0 0 1 .5 12.500C.5 5.500 6.500.5 14 .5z" fill="#fff" /><path d="M10.300 9a3 3 0 0 1 3 3c0 3-1.600 5.500-4.500 6 1.300-1 1.600-2 1.500-3a3 3 0 0 1 0-6zM17.700 9a3 3 0 0 1 3 3c0 3-1.600 5.500-4.500 6 1.300-1 1.600-2 1.500-3a3 3 0 0 1 0-6z" fill="#e14747" /></svg>
          CHAT
        </ChatButton>
        <Watermark><div>Activate Windows</div>Go to Settings to activate Windows.</Watermark>
      </Viewport>
      <WindowsTaskbar />
    </Screen>
  );
}
